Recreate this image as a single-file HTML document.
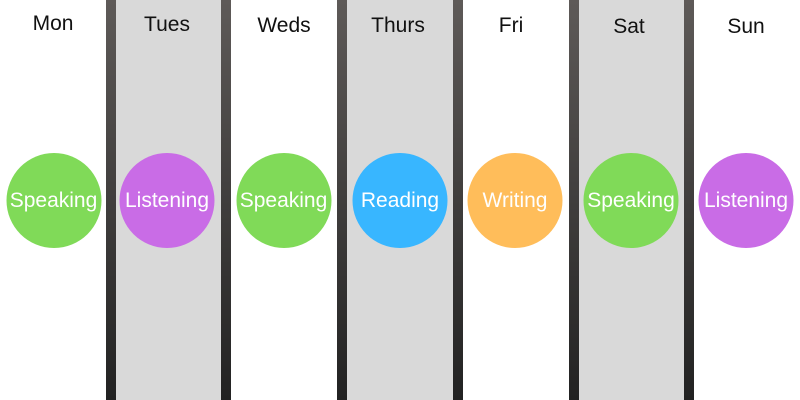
<!DOCTYPE html><html><head><style>
body{margin:0;width:800px;height:400px;position:relative;overflow:hidden;background:#fff;font-family:"Liberation Sans",sans-serif}
.b{position:absolute;top:0;height:400px;width:10px;background:linear-gradient(#5e5a58,#222)}
.g{position:absolute;top:0;height:400px;background:#d9d9d9}
.l{position:absolute;font-size:21px;color:#111;transform:translate(-50%,-50%);white-space:nowrap}
.c{position:absolute;top:153px;width:95px;height:95px;border-radius:50%;color:#fff;font-size:21px;display:flex;align-items:center;justify-content:center;transform:translateX(-50%)}
</style></head><body>
<div class="g" style="left:116px;width:105px"></div>
<div class="g" style="left:347px;width:106px"></div>
<div class="g" style="left:579px;width:105px"></div>
<div class="b" style="left:106px"></div><div class="b" style="left:221px"></div><div class="b" style="left:337px"></div><div class="b" style="left:453px"></div><div class="b" style="left:569px"></div><div class="b" style="left:684px"></div>
<div class="l" style="left:53px;top:24px">Mon</div>
<div class="l" style="left:167px;top:25px">Tues</div>
<div class="l" style="left:284px;top:26px">Weds</div>
<div class="l" style="left:398px;top:26px">Thurs</div>
<div class="l" style="left:511px;top:26px">Fri</div>
<div class="l" style="left:629px;top:27px">Sat</div>
<div class="l" style="left:746px;top:27px">Sun</div>
<div class="c" style="left:53.5px;background:#80da58">Speaking</div>
<div class="c" style="left:167px;background:#c96ce6">Listening</div>
<div class="c" style="left:283.5px;background:#80da58">Speaking</div>
<div class="c" style="left:400px;background:#38b6ff">Reading</div>
<div class="c" style="left:515px;background:#ffbd5a">Writing</div>
<div class="c" style="left:631px;background:#80da58">Speaking</div>
<div class="c" style="left:746px;background:#c96ce6">Listening</div>
</body></html>
